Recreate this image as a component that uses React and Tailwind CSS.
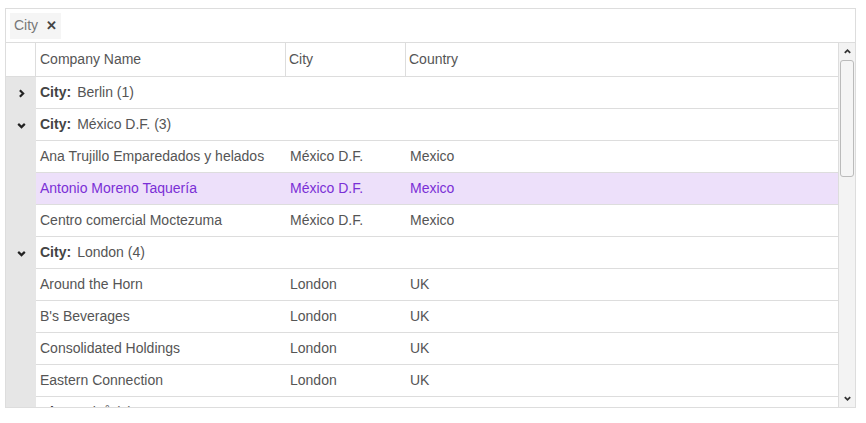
import React from 'react';

const rows = [
  { g: true, open: false, label: 'Berlin (1)' },
  { g: true, open: true, label: 'México D.F. (3)' },
  { c: ['Ana Trujillo Emparedados y helados', 'México D.F.', 'Mexico'] },
  { c: ['Antonio Moreno Taquería', 'México D.F.', 'Mexico'], sel: true },
  { c: ['Centro comercial Moctezuma', 'México D.F.', 'Mexico'] },
  { g: true, open: true, label: 'London (4)' },
  { c: ['Around the Horn', 'London', 'UK'] },
  { c: ["B's Beverages", 'London', 'UK'] },
  { c: ['Consolidated Holdings', 'London', 'UK'] },
  { c: ['Eastern Connection', 'London', 'UK'] },
  { g: true, open: false, label: 'Luleå (1)' },
];

const Chev = ({ open }) => (
  <svg width="11" height="11" viewBox="0 0 10 10" fill="none" stroke="#222" strokeWidth="2">
    {open ? <path d="M2 3.5l3 3 3-3" /> : <path d="M3.5 2l3 3-3 3" />}
  </svg>
);

export default function App() {
  return (
    <div className="p-[5px] pt-[8px] bg-white text-[14px] text-[#555]" style={{ fontFamily: 'Arial, "Liberation Sans", sans-serif' }}>
      <div className="w-[851px] h-[400px] border border-[#ddd] flex flex-col">
        <div className="h-[34px] border-b border-[#ddd] flex items-center px-[4px]">
          <div className="h-[26px] bg-[#f5f5f5] flex items-center px-[4px] gap-[8px] text-[#777]">
            City <span className="text-[#444] text-[13px] font-bold">✕</span>
          </div>
        </div>
        <div className="flex flex-1 min-h-0">
          <div className="flex-1 flex flex-col min-w-0">
            <div className="h-[34px] flex border-b border-[#ddd] shrink-0">
              <div className="w-[30px] border-r border-[#ddd]" />
              <div className="w-[250px] border-r border-[#ddd] px-[4px] flex items-center">Company Name</div>
              <div className="w-[120px] border-r border-[#ddd] px-[3px] flex items-center">City</div>
              <div className="flex-1 px-[3px] flex items-center">Country</div>
            </div>
            <div className="flex-1 overflow-hidden">
              {rows.map((r, i) => (
                <div key={i} className={`h-[32px] flex border-b border-[#ddd] ${r.sel ? 'bg-[#ede0fa] text-[#7b2fd6]' : ''}`}>
                  <div className="w-[30px] bg-[#e6e6e6] flex items-center justify-center shrink-0 -mb-px">
                    {r.g && <Chev open={r.open} />}
                  </div>
                  {r.g ? (
                    <div className="flex-1 px-[4px] flex items-center text-[#555]">
                      <b className="text-[#444] mr-[6px]">City:</b>{r.label}
                    </div>
                  ) : (
                    <>
                      <div className="w-[250px] px-[4px] flex items-center whitespace-nowrap">{r.c[0]}</div>
                      <div className="w-[120px] px-[4px] flex items-center">{r.c[1]}</div>
                      <div className="flex-1 px-[4px] flex items-center">{r.c[2]}</div>
                    </>
                  )}
                </div>
              ))}
            </div>
          </div>
          <div className="w-[17px] border-l border-[#ddd] bg-[#f3f3f3] flex flex-col items-center">
            <div className="h-[17px] flex items-center justify-center">
              <svg width="9" height="9" viewBox="0 0 10 10" fill="none" stroke="#333" strokeWidth="2"><path d="M2 6.5l3-3 3 3" /></svg>
            </div>
            <div className="w-[14px] h-[117px] border border-[#bbb] rounded-[3px] bg-[#f5f5f5]" />
            <div className="flex-1" />
            <div className="h-[17px] flex items-center justify-center">
              <svg width="9" height="9" viewBox="0 0 10 10" fill="none" stroke="#333" strokeWidth="2"><path d="M2 3.5l3 3 3-3" /></svg>
            </div>
          </div>
        </div>
      </div>
    </div>
  );
}
